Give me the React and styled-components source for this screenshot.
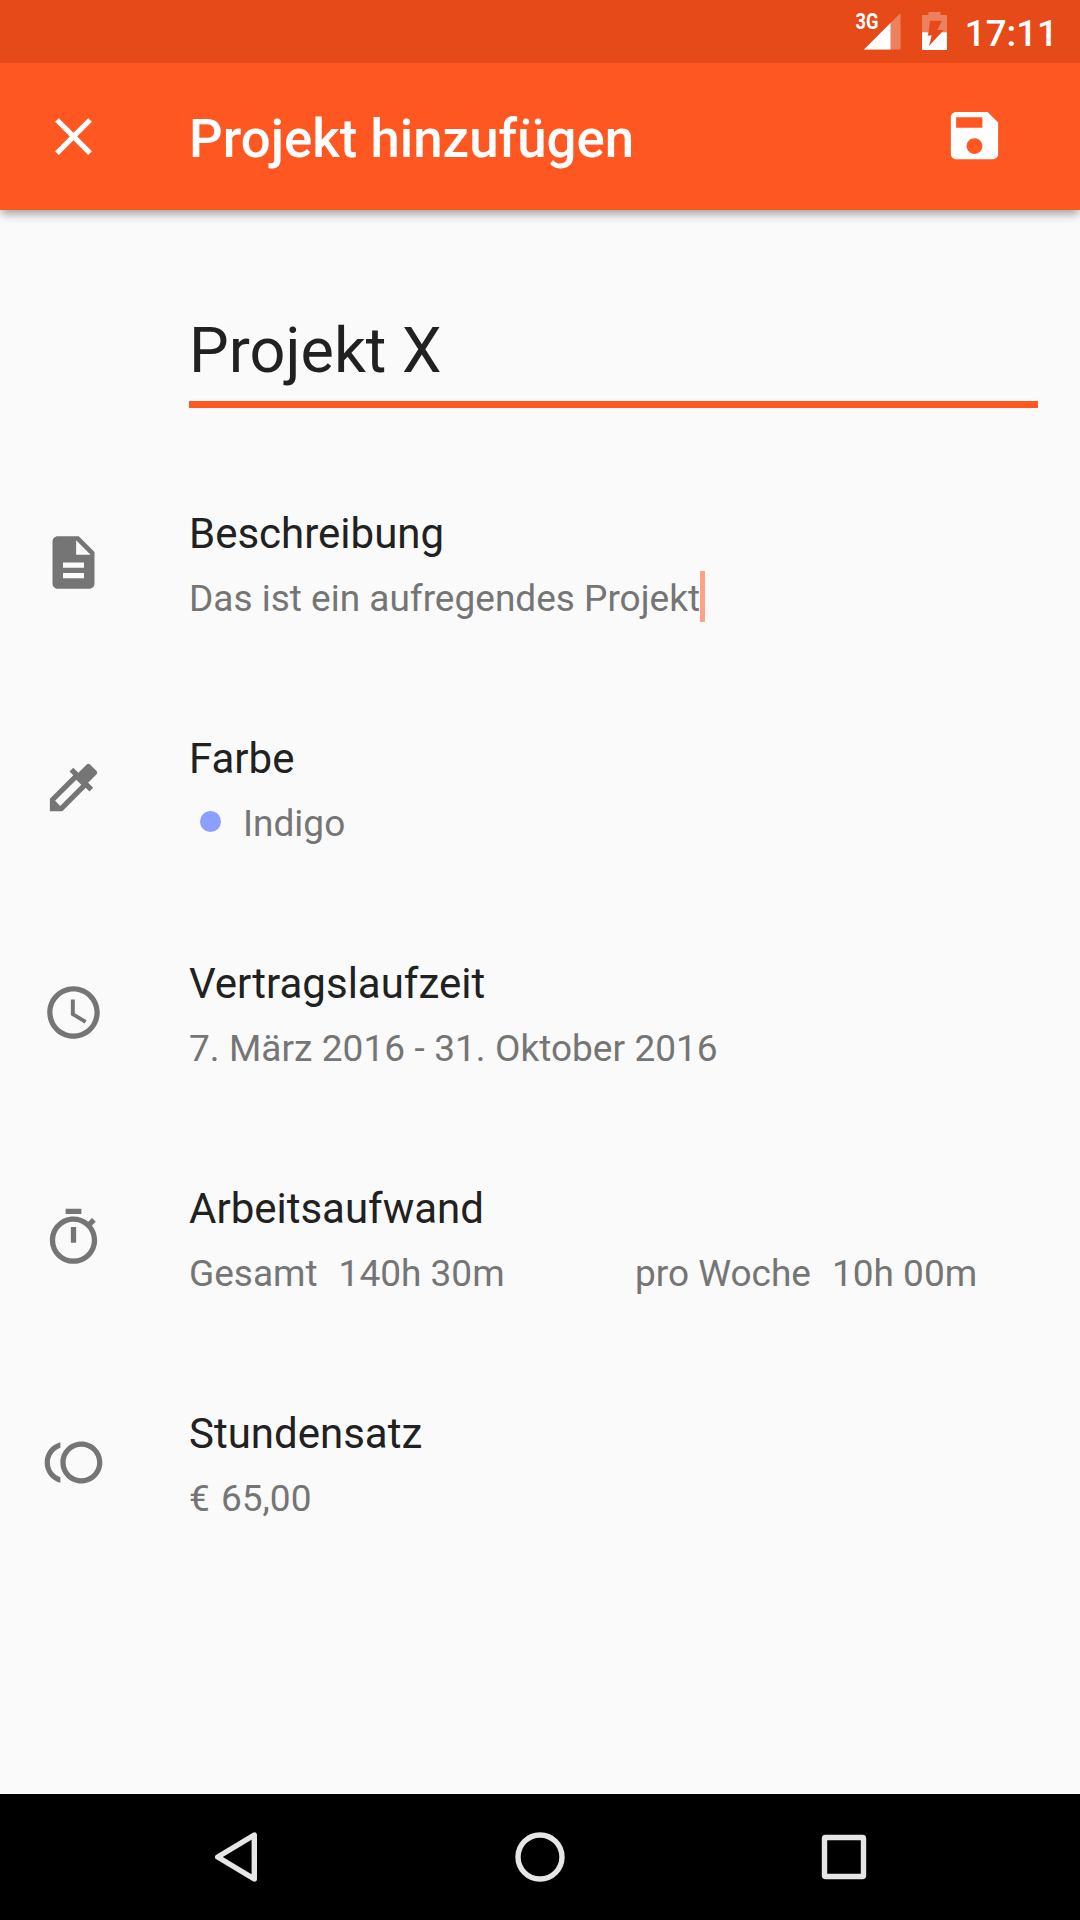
import React from 'react';
import styled, { createGlobalStyle } from 'styled-components';

const GlobalStyle = createGlobalStyle`
  body {
    margin: 0;
    background-color: #fafafa;
  }
`;

const Screen = styled.div`
  display: flex;
  flex-direction: column;
  width: 1080px;
  height: 1920px;
  overflow: hidden;
  background-color: #fafafa;
  font-family: Roboto, sans-serif;
  color: #212121;
`;

const StatusBar = styled.div`
  position: relative;
  z-index: 1;
  display: flex;
  flex: none;
  align-items: center;
  justify-content: flex-end;
  box-sizing: border-box;
  height: 63px;
  padding-right: 22px;
  background-color: #e64a19;
`;

const StatusIcons = styled.svg`
  display: block;
  flex: none;
  width: 100px;
  height: 63px;
  font-size: 22px;
  font-weight: 700;
`;

const Time = styled.div`
  width: 108px;
  padding-top: 3px;
  font-size: 36.75px;
  font-weight: 500;
  line-height: 63px;
  text-align: right;
  color: white;
`;

const Toolbar = styled.header`
  display: flex;
  flex: none;
  align-items: center;
  box-sizing: border-box;
  height: 147px;
  padding: 0 74px 0 42px;
  background-color: #ff5722;
  box-shadow: 0 5px 9px -1px rgba(0, 0, 0, 0.36);
  color: white;
`;

const Title = styled.h1`
  flex: 1;
  margin: 4px 0 0 84px;
  font-size: 52.8px;
  font-weight: 500;
  line-height: 62px;
`;

const Icon = styled.svg`
  display: block;
  flex: none;
  width: 63px;
  height: 63px;
  margin-bottom: ${(props) => props.$lift || 0}px;
  fill: currentColor;
`;

const Form = styled.main`
  flex: 1;
`;

const NameField = styled.div`
  box-sizing: border-box;
  height: 198px;
  margin: 0 42px 0 189px;
  padding-top: 104px;
  border-bottom: 7px solid #ff5722;
  font-size: 63px;
  line-height: 74px;
`;

const Rows = styled.div`
  padding-top: 42px;
`;

const Row = styled.section`
  display: flex;
  align-items: center;
  height: 225px;
  padding-left: 42px;
  color: #757575;
`;

const RowText = styled.div`
  flex: 1;
  margin-left: 84px;
  padding-top: 8px;
`;

const Label = styled.div`
  font-size: 42px;
  line-height: 50px;
  color: #212121;
`;

const Value = styled.div`
  display: flex;
  align-items: center;
  height: 52px;
  margin-top: 13px;
  font-size: 37px;
  white-space: pre;
  word-spacing: ${(props) => props.$spacing || 0}px;
`;

const Caret = styled.span`
  width: 5px;
  height: 51px;
  margin-bottom: 3px;
  background-color: #ffa285;
`;

const Dot = styled.span`
  width: 21px;
  height: 21px;
  margin: 0 22px 3px 11px;
  border-radius: 50%;
  background-color: #8c9eff;
`;

const Amount = styled.span`
  width: ${(props) => props.$width || 'auto'};
`;

const Unit = styled.span`
  margin-right: 21px;
`;

const NavBar = styled.nav`
  display: flex;
  flex: none;
  justify-content: center;
  height: 126px;
  background-color: black;
`;

const NavKey = styled.svg`
  display: block;
  width: 304px;
  height: 126px;
  fill: none;
  stroke: #e6e6e6;
  stroke-width: 5.4;
  stroke-linejoin: round;
`;

const icons = {
  close:
    'M19 6.41L17.59 5 12 10.59 6.41 5 5 6.41 10.59 12 5 17.59 6.41 19 12 13.41 17.59 19 19 17.59 13.41 12z',
  save: 'M17 3H5c-1.11 0-2 .9-2 2v14c0 1.1.89 2 2 2h14c1.1 0 2-.9 2-2V7l-4-4zm-5 16c-1.66 0-3-1.34-3-3s1.34-3 3-3 3 1.34 3 3-1.34 3-3 3zm3-10H5V5h10v4z',
  description:
    'M14 2H6c-1.1 0-1.99.9-1.99 2L4 20c0 1.1.89 2 1.99 2H18c1.1 0 2-.9 2-2V8l-6-6zm2 16H8v-2h8v2zm0-4H8v-2h8v2zm-3-5V3.5L18.5 9H13z',
  colorize:
    'M20.71 5.63l-2.34-2.34c-.39-.39-1.02-.39-1.41 0l-3.12 3.12-1.93-1.91-1.41 1.41 1.42 1.42L3 16.25V21h4.75l8.92-8.92 1.42 1.42 1.41-1.41-1.92-1.92 3.12-3.12c.4-.4.4-1.03.01-1.42zM6.92 19L5 17.08l8.06-8.06 1.92 1.92L6.92 19z',
  schedule:
    'M11.99 2C6.47 2 2 6.48 2 12s4.47 10 9.99 10C17.52 22 22 17.52 22 12S17.52 2 11.99 2zM12 20c-4.42 0-8-3.58-8-8s3.58-8 8-8 8 3.58 8 8-3.58 8-8 8zm.5-13H11v6l5.25 3.15.75-1.23-4.5-2.67z',
  timer:
    'M15 1H9v2h6V1zm-4 13h2V8h-2v6zm8.03-6.61l1.42-1.42c-.43-.51-.9-.99-1.41-1.41l-1.42 1.42C16.07 4.74 14.12 4 12 4c-4.97 0-9 4.03-9 9s4.02 9 9 9 9-4.03 9-9c0-2.12-.74-4.07-1.97-5.61zM12 20c-3.87 0-7-3.13-7-7s3.13-7 7-7 7 3.13 7 7-3.13 7-7 7z',
  toll: 'M15 4c-4.42 0-8 3.58-8 8s3.58 8 8 8 8-3.58 8-8-3.58-8-8-8zm0 14c-3.31 0-6-2.69-6-6s2.69-6 6-6 6 2.69 6 6-2.69 6-6 6zM3 12c0-2.61 1.67-4.83 4-5.65V4.26C3.55 5.15 1 8.27 1 12s2.55 6.85 6 7.74v-2.09c-2.33-.82-4-3.04-4-5.65z',
};

const Glyph = ({ name, lift }) => (
  <Icon viewBox="0 0 24 24" $lift={lift}>
    <path d={icons[name]} />
  </Icon>
);

const FormRow = ({ icon, label, spacing, children }) => (
  <Row>
    <Glyph name={icon} />
    <RowText>
      <Label>{label}</Label>
      <Value $spacing={spacing}>{children}</Value>
    </RowText>
  </Row>
);

const App = () => (
  <>
    <GlobalStyle />
    <Screen>
      <StatusBar>
        <StatusIcons viewBox="850 0 100 63" fill="white">
          <path d="M900.5 13V49.5H864z" opacity="0.3" />
          <path d="M890.5 23V49.5H864z" />
          <text x="855.5" y="29" textLength="23" lengthAdjust="spacingAndGlyphs">
            3G
          </text>
          {/* battery, empty part above the charge level */}
          <path
            d="M922 32.3V15h6.5v-3h12v3h6.5v17.3h-5.3l1.7-2.3h-6l4.4-9.3h-11.7l-1.6 11.6z"
            opacity="0.3"
          />
          <path d="M922 32.3h6.5l-.8 3.2h4L929 46l12.7-13.7h5.3V50h-25z" />
        </StatusIcons>
        <Time>17:11</Time>
      </StatusBar>

      <Toolbar>
        <Glyph name="close" />
        <Title>Projekt hinzufügen</Title>
        <Glyph name="save" lift={2} />
      </Toolbar>

      <Form>
        <NameField>Projekt X</NameField>
        <Rows>
          <FormRow icon="description" label="Beschreibung">
            Das ist ein aufregendes Projekt
            <Caret />
          </FormRow>
          <FormRow icon="colorize" label="Farbe">
            <Dot />
            Indigo
          </FormRow>
          <FormRow icon="schedule" label="Vertragslaufzeit" spacing={0.3}>
            7. März 2016 - 31. Oktober 2016
          </FormRow>
          <FormRow icon="timer" label="Arbeitsaufwand">
            <Amount $width="446px">
              <Unit>Gesamt</Unit>140h 30m
            </Amount>
            <Amount>
              <Unit>pro Woche</Unit>10h 00m
            </Amount>
          </FormRow>
          <FormRow icon="toll" label="Stundensatz" spacing={2}>
            € 65,00
          </FormRow>
        </Rows>
      </Form>

      <NavBar>
        <NavKey viewBox="84 1794 304 126">
          <path d="M217.7 1857L254.3 1835V1879z" />
        </NavKey>
        <NavKey viewBox="388 1794 304 126">
          <circle cx="540" cy="1857" r="22" />
        </NavKey>
        <NavKey viewBox="692 1794 304 126">
          <rect x="824.5" y="1837.5" width="39" height="39" rx="1" />
        </NavKey>
      </NavBar>
    </Screen>
  </>
);

export default App;
